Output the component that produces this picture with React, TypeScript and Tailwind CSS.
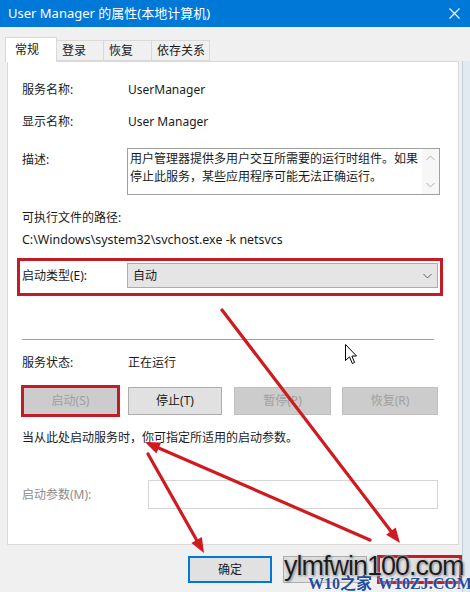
import React from "react";

function Arrow({ x1, y1, x2, y2 }: { x1: number; y1: number; x2: number; y2: number }) {
  const dx = x2 - x1;
  const dy = y2 - y1;
  const len = Math.hypot(dx, dy);
  const ux = dx / len;
  const uy = dy / len;
  const head = 15;
  const half = 6;
  const bx = x2 - ux * head;
  const by = y2 - uy * head;
  const pts = `${x2},${y2} ${bx - uy * half},${by + ux * half} ${bx + uy * half},${by - ux * half}`;
  return (
    <g>
      <line x1={x1} y1={y1} x2={bx + ux * 2} y2={by + uy * 2} stroke="#cf1a20" strokeWidth={3.2} strokeLinecap="round" />
      <polygon points={pts} fill="#cf1a20" />
    </g>
  );
}

function Chevron({ up = false, color = "#606060" }: { up?: boolean; color?: string }) {
  return (
    <svg width="9" height="6" viewBox="0 0 9 6">
      <path d={up ? "M0.5 5 L4.5 1 L8.5 5" : "M0.5 1 L4.5 5 L8.5 1"} fill="none" stroke={color} strokeWidth="1" />
    </svg>
  );
}

function Btn({ label, w, ml, disabled = false }: { label: string; w: string; ml: string; disabled?: boolean }) {
  return (
    <div
      className={`${w} ${ml} h-[28px] flex items-center justify-center border ${
        disabled ? "bg-[#cccccc] border-[#bfbfbf] text-[#a0a0a0]" : "bg-[#e1e1e1] border-[#adadad] text-[#1a1a1a]"
      }`}
    >
      {label}
    </div>
  );
}

export default function App() {
  return (
    <div className="relative w-[470px] h-[592px] overflow-hidden bg-[#f0f0f0] text-[12px] text-[#1a1a1a] [font-family:'Noto_Sans','Noto_Sans_CJK_SC',sans-serif]">
      {/* Title bar */}
      <div className="h-[27px] bg-[#0078d7] flex items-center justify-between pl-[8px] pr-[10px] text-white text-[13px]">
        <span>User Manager 的属性(本地计算机)</span>
        <svg width="11" height="11" viewBox="0 0 11 11">
          <path d="M0.5 0.5 L10.5 10.5 M10.5 0.5 L0.5 10.5" stroke="#fff" strokeWidth="1.1" />
        </svg>
      </div>

      {/* Tabs */}
      <div className="mt-[10px] pl-[5px] flex items-end h-[24px]">
        <div className="relative z-10 w-[52px] h-[25px] -mb-px bg-white border border-b-0 border-[#d9d9d9] flex items-center pl-[9px]">
          常规
        </div>
        <div className="w-[47px] h-[21px] border border-l-0 border-[#d9d9d9] flex items-center pl-[5px]">登录</div>
        <div className="w-[48px] h-[21px] border border-l-0 border-[#d9d9d9] flex items-center pl-[5px]">恢复</div>
        <div className="w-[58px] h-[21px] border border-l-0 border-[#d9d9d9] flex items-center pl-[5px]">依存关系</div>
      </div>

      {/* Panel */}
      <div className="ml-[7px] w-[452px] h-[484px] border border-[#d9d9d9] bg-white flex flex-col">
        <div className="mt-[18px] h-[20px] flex items-center pl-[14px]">
          <span className="w-[106px]">服务名称:</span>
          <span>UserManager</span>
        </div>
        <div className="mt-[12px] h-[20px] flex items-center pl-[14px]">
          <span className="w-[106px]">显示名称:</span>
          <span>User Manager</span>
        </div>
        <div className="mt-[16px] flex items-start pl-[14px]">
          <span className="w-[105px] mt-[2px] h-[20px] flex items-center">描述:</span>
          <div className="w-[313px] h-[47px] border border-[#a0a0a0] flex">
            <div className="flex-1 pl-[2px] leading-[18px] pt-[1px]">
              用户管理器提供多用户交互所需要的运行时组件。如果停止此服务，某些应用程序可能无法正确运行。
            </div>
            <div className="w-[17px] bg-[#f7f7f7] flex flex-col items-center justify-between py-[6px]">
              <Chevron up color="#b0b0b0" />
              <Chevron color="#b0b0b0" />
            </div>
          </div>
        </div>
        <div className="mt-[13px] h-[20px] flex items-center pl-[14px]">可执行文件的路径:</div>
        <div className="mt-[2px] h-[20px] flex items-center pl-[14px] text-[12.4px]">C:\Windows\system32\svchost.exe -k netsvcs</div>

        <div className="mt-[8px] ml-[9px] w-[426px] h-[38px] border-[3px] border-[#c41c24] pt-[2px] pl-[2px] flex items-start">
          <span className="w-[105px] h-[25px] flex items-center">启动类型(E):</span>
          <div className="w-[311px] h-[25px] bg-[#e5e5e5] border border-[#adadad] flex items-center justify-between pl-[5px] pr-[5px]">
            <span>自动</span>
            <Chevron />
          </div>
        </div>

        <div className="mt-[43px] ml-[14px] w-[412px] h-px bg-[#a0a0a0]" />

        <div className="mt-[13px] h-[20px] flex items-center pl-[14px]">
          <span className="w-[106px]">服务状态:</span>
          <span>正在运行</span>
        </div>

        <div className="mt-[12px] h-[32px] flex items-center pl-[13px]">
          <div className="w-[99px] h-[32px] border-[3px] border-[#c41c24] bg-[#cccccc] text-[#a0a0a0] flex items-center justify-center">
            启动(S)
          </div>
          <Btn label="停止(T)" w="w-[94px]" ml="ml-[8px]" />
          <Btn label="暂停(P)" w="w-[97px]" ml="ml-[12px]" disabled />
          <Btn label="恢复(R)" w="w-[96px]" ml="ml-[11px]" disabled />
        </div>

        <div className="mt-[11px] h-[20px] flex items-center pl-[14px]">当从此处启动服务时，你可指定所适用的启动参数。</div>

        <div className="mt-[32px] h-[29px] flex items-center pl-[14px]">
          <span className="w-[126px] text-[#8c8c8c]">启动参数(M):</span>
          <div className="w-[290px] h-[29px] border border-[#d5d5d5] bg-white" />
        </div>
      </div>

      {/* Dialog buttons (labels of the last two are hidden under the watermark) */}
      <div className="mt-[11px] pl-[188px] flex items-center h-[27px]">
        <div className="w-[84px] h-[27px] border-2 border-[#0078d7] bg-[#e1e1e1] flex items-center justify-center">确定</div>
        <div className="ml-[11px] w-[84px] h-[27px] border border-[#adadad] bg-[#e1e1e1]" />
        <div className="ml-[10px] w-[85px] h-[29px] border-[3px] border-[#c41c24] bg-[#e1e1e1]" />
      </div>

      {/* Right window edge */}
      <div className="absolute right-0 top-[61px] w-[8px] h-[531px] bg-[#e2eaf1] border-l border-[#c4ccd4]" />

      {/* Annotations */}
      <svg className="absolute inset-0 pointer-events-none" width="470" height="592" viewBox="0 0 470 592">
        <Arrow x1={222} y1={310} x2={400} y2={543} />
        <Arrow x1={370} y1={540} x2={145} y2={442} />
        <Arrow x1={148} y1={454} x2={204} y2={553} />
      </svg>

      {/* Mouse cursor */}
      <svg className="absolute left-[345px] top-[344px]" width="13" height="21" viewBox="0 0 13 21">
        <path d="M0.5 0.5 L0.5 16.5 L4.5 12.8 L7.3 19.5 L9.6 18.5 L6.9 12 L11.5 12 Z" fill="#fff" stroke="#000" strokeWidth="1" strokeLinejoin="round" />
      </svg>

      {/* Watermark */}
      <div className="absolute left-[284px] top-[546px] whitespace-nowrap text-[27px] tracking-[-1px] text-[#1c1c1c] [font-family:'Liberation_Sans',Arial,sans-serif] [text-shadow:0_0_2px_#fff,0_0_3px_#999,1px_1px_2px_#777]">
        ylmfwin100.com
      </div>
      <div className="absolute left-[308px] top-[574px] whitespace-nowrap text-[16px] leading-[20px] font-bold text-[#1f4fa3] [font-family:'Liberation_Serif','Noto_Sans_CJK_SC',serif] [text-shadow:0_0_2px_#fff]">
        W10之家 <span className="ml-[2px]">W10ZJ.COM</span>
      </div>
    </div>
  );
}
